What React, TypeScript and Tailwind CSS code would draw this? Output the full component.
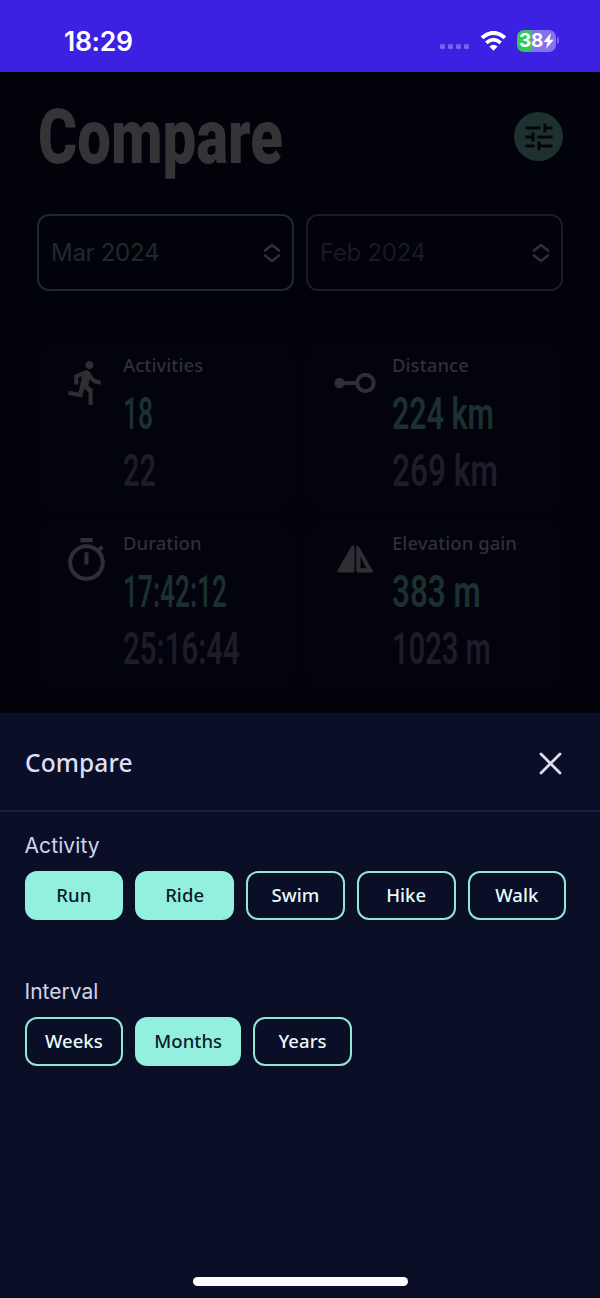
import React, { useLayoutEffect, useRef, useState } from 'react';
import { MdTune, MdDirectionsRun, MdOutlineTimer } from 'react-icons/md';

// Squeezes a line of text horizontally to the given width
const Condensed = ({ text, width, className }: { text: string; width: number; className: string }) => {
  const ref = useRef<HTMLSpanElement>(null);
  const [scale, setScale] = useState(1);

  useLayoutEffect(() => {
    if (ref.current) setScale(width / ref.current.offsetWidth);
  }, [text, width]);

  return (
    <div className={className} style={{ width }}>
      <span
        ref={ref}
        className="inline-block origin-left whitespace-nowrap"
        style={{ transform: `scaleX(${scale})` }}
      >
        {text}
      </span>
    </div>
  );
};

const DistanceIcon = () => (
  <svg className="w-[49px] h-[49px]" viewBox="0 0 49 49" fill="none" stroke="currentColor" strokeWidth="4">
    <circle cx="8.5" cy="25" r="5.2" fill="currentColor" stroke="none" />
    <path d="M9 25h16" />
    <circle cx="34.5" cy="25" r="8.2" />
  </svg>
);

const ElevationIcon = () => (
  <svg className="w-[49px] h-[49px]" viewBox="0 0 49 49" fill="currentColor">
    <path d="M23.500 10v24.500q0 2-2 2H8q-2.500 0-1.500-2.300L20 11q1.500-2.500 3.500-1z" />
    <path
      fillRule="evenodd"
      d="M25.200 10q1.500-1.500 3 1l13.300 23.200q1 2.300-1.500 2.300H27q-1.800 0-1.800-2zM29.500 20.500v11.700h5.800z"
    />
  </svg>
);

const ExpandIcon = () => (
  <svg
    className="w-[18px] h-[20px]"
    viewBox="0 0 18 20"
    fill="none"
    stroke="currentColor"
    strokeWidth="2.600"
    strokeLinecap="round"
    strokeLinejoin="round"
  >
    <path d="M2 7.500 9 2l7 5.500M2 12.500 9 18l7-5.500" />
  </svg>
);

const stats = [
  {
    label: 'Activities',
    icon: <MdDirectionsRun className="w-[49px] h-[49px]" />,
    current: '18',
    currentWidth: 30,
    previous: '22',
    previousWidth: 33,
  },
  {
    label: 'Distance',
    icon: <DistanceIcon />,
    current: '224 km',
    currentWidth: 102,
    previous: '269 km',
    previousWidth: 106,
  },
  {
    label: 'Duration',
    icon: <MdOutlineTimer className="w-[49px] h-[49px]" />,
    current: '17:42:12',
    currentWidth: 104,
    previous: '25:16:44',
    previousWidth: 117,
  },
  {
    label: 'Elevation gain',
    icon: <ElevationIcon />,
    current: '383 m',
    currentWidth: 89,
    previous: '1023 m',
    previousWidth: 99,
  },
];

const StatusBar = () => (
  <div className="h-[72px] bg-[#3d21e3] flex items-center justify-between pl-[64px] pr-[41px] pt-[9px] text-white">
    <div className="font-['Inter'] text-[26.500px] leading-8 font-semibold tracking-[-0.300px]">18:29</div>
    <div className="flex items-center">
      <div className="flex gap-[3px] mt-[12px] mr-[11px]">
        {[0, 1, 2, 3].map((dot) => (
          <div key={dot} className="w-[5px] h-[5px] rounded-[1.500px] bg-[#7763ec]"></div>
        ))}
      </div>
      <svg className="w-[27px] h-[20px] mr-[10px]" viewBox="0 0 27 20" fill="none" stroke="currentColor">
        <path d="M2 6.800Q13.500-3 25 6.800" strokeWidth="4" />
        <path d="M6.300 11.800Q13.500 5.600 20.700 11.800" strokeWidth="3.600" />
        <path d="M13.500 19.800 9.400 15.500Q13.500 12 17.600 15.500z" fill="currentColor" stroke="none" />
      </svg>
      <div className="w-[39px] h-[22px] rounded-[7px] overflow-hidden flex items-center justify-center bg-[linear-gradient(to_right,#35c759_0_15px,#8573ee_15px)]">
        <span className="font-['Inter'] text-[19px] leading-none font-bold tracking-[-0.300px]">38</span>
        <svg className="w-[11px] h-[16px]" viewBox="0 0 11 16" fill="currentColor">
          <path d="M8 0 .500 9h4L3 16l7.700-9.300H6.600z" />
        </svg>
      </div>
      <div className="w-[2px] h-[7px] ml-[1px] rounded-r-full bg-[#7763ec]"></div>
    </div>
  </div>
);

const MonthSelect = ({ value, className }: { value: string; className: string }) => (
  <div className={`flex-1 h-[77px] rounded-[12px] border-2 flex items-center justify-between pl-3 pr-[11px] ${className}`}>
    <span className="font-['Inter'] text-[24px] font-normal tracking-[-0.300px]">{value}</span>
    <span className="text-[#303034]">
      <ExpandIcon />
    </span>
  </div>
);

const Chip = ({ label, selected }: { label: string; selected?: boolean }) => (
  <button
    className={`h-[49px] min-w-[98.750px] px-[17px] pb-[2px] rounded-[12px] border-2 text-[18.500px] font-medium tracking-[0.050px] ${
      selected ? 'bg-[#93f0df] border-[#93f0df] text-[#0b1a2a]' : 'border-[#93e8d4] text-[#e6fbf8]'
    }`}
  >
    {label}
  </button>
);

const App = () => {
  const [activities] = useState(['Run', 'Ride']);
  const [interval] = useState('Months');

  return (
    <div className="w-[600px] h-[1298px] overflow-hidden flex flex-col bg-[#01020a] font-['Noto_Sans',sans-serif]">
      <StatusBar />

      {/* Dimmed page */}
      <div className="h-[641px] px-[37px]">
        <div className="flex justify-between pt-[21px]">
          <Condensed
            text="Compare"
            width={245}
            className="h-[99px] ml-[1px] font-['Roboto'] text-[76px] leading-[88px] font-black text-[#343436]"
          />
          <div className="w-[49px] h-[49px] mt-[19px] rounded-full bg-[#1e302f] text-[#03060c] flex items-center justify-center">
            <MdTune className="w-[36px] h-[36px]" />
          </div>
        </div>

        <div className="flex gap-3 mt-[22px]">
          <MonthSelect value="Mar 2024" className="border-[#1c2a2b] text-[#20282b]" />
          <MonthSelect value="Feb 2024" className="border-[#1c1d22] text-[#1a1a21]" />
        </div>

        <div className="grid grid-cols-2 gap-x-3 gap-y-3 mt-[53px]">
          {stats.map((stat) => (
            <div key={stat.label} className="h-[166px] rounded-[12px] bg-[#02030c] flex gap-3 pl-[25px] pt-[8px]">
              <div className="mt-[6px] text-[#2f2f33]">{stat.icon}</div>
              <div className="flex-1">
                <div className="text-[18.500px] leading-[26px] font-medium tracking-[0.050px] whitespace-nowrap text-[#303035]">
                  {stat.label}
                </div>
                <Condensed
                  text={stat.current}
                  width={stat.currentWidth}
                  className="mt-[10px] h-[57px] font-['Roboto'] text-[44px] leading-[52px] font-semibold text-[#1c302e]"
                />
                <Condensed
                  text={stat.previous}
                  width={stat.previousWidth}
                  className="h-[52px] font-['Roboto'] text-[44px] leading-[52px] font-semibold text-[#1e1c29]"
                />
              </div>
            </div>
          ))}
        </div>
      </div>

      {/* Filter sheet */}
      <div className="flex-1 bg-[#0a0e27] flex flex-col">
        <div className="h-[99px] px-[25px] pt-[2px] border-b-2 border-[#191f4c] flex items-center justify-between text-[#dedff5]">
          <div className="pt-[2px] text-[24.500px] font-medium tracking-[0.100px]">Compare</div>
          <svg
            className="w-[24px] h-[24px] mr-[13px]"
            viewBox="0 0 24 24"
            fill="none"
            stroke="currentColor"
            strokeWidth="2.800"
            strokeLinecap="round"
          >
            <path d="m3 3 19 19M22 3 3 22" />
          </svg>
        </div>

        <div className="px-[24.500px] pt-[18px]">
          <div className="font-['Inter'] text-[21px] leading-8 tracking-[0.100px] text-[#d2d4ea]">Activity</div>
          <div className="flex gap-3 mt-[9px]">
            {['Run', 'Ride', 'Swim', 'Hike', 'Walk'].map((name) => (
              <Chip key={name} label={name} selected={activities.includes(name)} />
            ))}
          </div>

          <div className="font-['Inter'] text-[21px] leading-8 mt-[56px] text-[#d2d4ea]">Interval</div>
          <div className="flex gap-3 mt-[9px]">
            {['Weeks', 'Months', 'Years'].map((name) => (
              <Chip key={name} label={name} selected={interval === name} />
            ))}
          </div>
        </div>

        <div className="w-[215px] h-[9px] mt-auto mb-[12px] mx-auto rounded-full bg-white"></div>
      </div>
    </div>
  );
};

export default App;
